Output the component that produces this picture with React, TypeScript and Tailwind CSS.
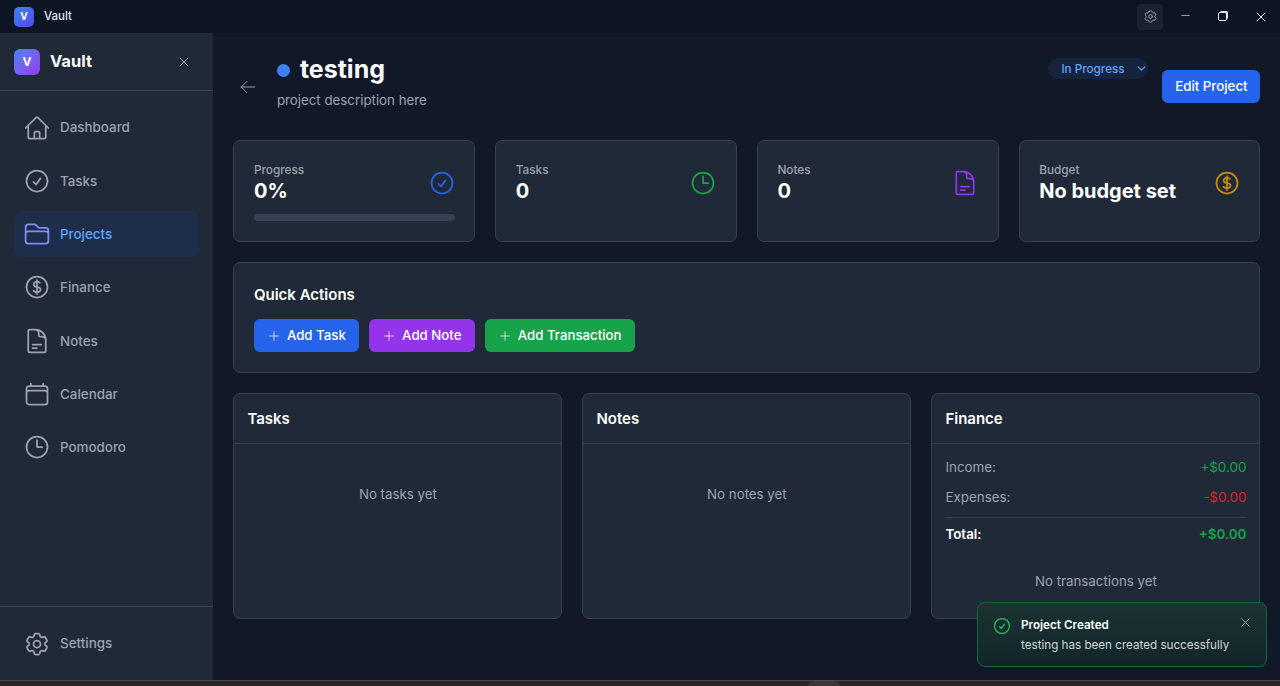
import {
  HiOutlineArrowLeft,
  HiOutlineCalendar,
  HiOutlineCheckCircle,
  HiOutlineChevronDown,
  HiOutlineClock,
  HiOutlineCog6Tooth,
  HiOutlineCurrencyDollar,
  HiOutlineDocumentText,
  HiOutlineFolder,
  HiOutlineHome,
  HiOutlineMinus,
  HiOutlinePlus,
  HiOutlineXMark,
} from "react-icons/hi2";

const navItems = [
  { label: "Dashboard", icon: HiOutlineHome },
  { label: "Tasks", icon: HiOutlineCheckCircle },
  { label: "Projects", icon: HiOutlineFolder, active: true },
  { label: "Finance", icon: HiOutlineCurrencyDollar },
  { label: "Notes", icon: HiOutlineDocumentText },
  { label: "Calendar", icon: HiOutlineCalendar },
  { label: "Pomodoro", icon: HiOutlineClock },
];

const stats = [
  { label: "Tasks", value: "0", icon: HiOutlineClock, color: "text-[#16a34a]" },
  { label: "Notes", value: "0", icon: HiOutlineDocumentText, color: "text-[#9333ea]" },
  { label: "Budget", value: "No budget set", icon: HiOutlineCurrencyDollar, color: "text-[#ca8a04]" },
];

const actions = [
  { label: "Add Task", color: "bg-[#2563eb]" },
  { label: "Add Note", color: "bg-[#9333ea]" },
  { label: "Add Transaction", color: "bg-[#16a34a]" },
];

function TitleBar() {
  return (
    <div className="flex h-[33px] shrink-0 items-center bg-[#0d1424] pl-[14px]">
      <div className="flex h-5 w-5 items-center justify-center rounded-[5px] bg-gradient-to-br from-[#3b82f6] to-[#4f46e5] text-[10px] font-bold text-white">
        V
      </div>
      <span className="ml-[10px] text-[11.5px] font-medium text-[#e5e7eb]">Vault</span>
      <div className="ml-auto flex items-center">
        <div className="flex h-[26px] w-[26px] items-center justify-center rounded bg-[#1a2130] text-[#9ca3af]">
          <HiOutlineCog6Tooth size={15} />
        </div>
        <div className="mb-[2px] ml-[14px] flex w-[16px] justify-center text-[#d1d5db]">
          <HiOutlineMinus size={13} strokeWidth={1.25} />
        </div>
        <div className="relative ml-[25px] h-[9px] w-[9px] rounded-[2px] border border-[#e5e7eb] bg-[#0d1424] shadow-[1.5px_-1.5px_0_-0.5px_#e5e7eb]" />
        <div className="ml-[26px] mr-[11px] text-[#e5e7eb]">
          <HiOutlineXMark size={16} />
        </div>
      </div>
    </div>
  );
}

function Sidebar() {
  return (
    <aside className="flex w-[214px] shrink-0 flex-col border-r border-[#111827] bg-[#1f2937]">
      <div className="flex h-[58px] shrink-0 items-center border-b border-[#374151] pl-[14px] pr-[21px]">
        <div className="flex h-[26px] w-[26px] items-center justify-center rounded-md bg-gradient-to-br from-[#3b82f6] to-[#9333ea] text-xs font-bold text-white">
          V
        </div>
        <span className="ml-[10px] text-[16.5px] font-bold text-white">Vault</span>
        <HiOutlineXMark size={16} className="ml-auto text-[#9ca3af]" />
      </div>
      <nav className="flex flex-1 flex-col gap-[7.33px] px-[14px] pt-[13.5px]">
        {navItems.map((item) => (
          <div
            key={item.label}
            className={`flex h-[46px] items-center gap-[9.5px] rounded-lg pl-[8.5px] text-[13.4px] font-medium ${
              item.active ? "bg-[#1e2d4a] text-[#60a5fa]" : "text-[#9ca3af]"
            }`}
          >
            <item.icon size={28} className={item.active ? "text-[#818cf8]" : ""} />
            {item.label}
          </div>
        ))}
      </nav>
      <div className="flex h-[74px] shrink-0 items-center gap-[9.5px] border-t border-[#374151] pl-[22.5px] text-[13.4px] font-medium text-[#9ca3af]">
        <HiOutlineCog6Tooth size={28} />
        Settings
      </div>
    </aside>
  );
}

function Panel({ title, children }: { title: string; children: React.ReactNode }) {
  return (
    <div className="h-[226px] rounded-[7px] border border-[#343f4f] bg-[#1f2937]">
      <div className="flex h-[50px] items-center border-b border-[#343f4f] px-[13px] pt-[2px] text-[15px] font-semibold text-white">
        {title}
      </div>
      {children}
    </div>
  );
}

function Row({ label, value, color }: { label: string; value: string; color: string }) {
  return (
    <div className="flex h-5 items-center justify-between text-[13.4px]">
      <span className="text-[#9ca3af]">{label}</span>
      <span className={color}>{value}</span>
    </div>
  );
}

export default function App() {
  return (
    <div className="relative flex h-[686px] w-[1280px] flex-col overflow-hidden bg-[#111827] [font-family:Inter,sans-serif]">
      <TitleBar />
      <div className="flex min-h-0 flex-1">
        <Sidebar />
        <main className="min-w-0 flex-1 pl-[19.4px] pr-[19.6px]">
          {/* Header */}
          <div className="flex h-[107px]">
            <div className="w-[43.5px] pl-[6px] pt-[45px] text-[#9ca3af]">
              <HiOutlineArrowLeft size={18} strokeWidth={1.25} />
            </div>
            <div className="pt-[17px]">
              <div className="flex h-[40px] items-center gap-[10px]">
                <span className="h-[13px] w-[13px] rounded-full bg-[#3b82f6]" />
                <h1 className="text-[25px] font-bold text-white">testing</h1>
              </div>
              <p className="mt-[1px] text-[13.3px] text-[#9ca3af]">project description here</p>
            </div>
            <div className="ml-auto flex items-start">
              <div className="mt-[25px] flex h-[21px] w-[100px] items-center rounded-full bg-[#16233f] pl-[13px] text-[11.7px] font-medium text-[#60a5fa]">
                <span className="translate-y-[1px]">In Progress</span>
                <HiOutlineChevronDown size={11} strokeWidth={2.5} className="ml-[11px]" />
              </div>
              <button className="ml-[14px] mt-[37px] h-[33px] w-[98px] rounded-md bg-[#2563eb] pt-px text-[13.3px] font-medium text-white">
                Edit Project
              </button>
            </div>
          </div>

          {/* Stat cards */}
          <div className="grid grid-cols-4 gap-5">
            <div className="flex h-[102px] flex-col rounded-[7px] border border-[#343f4f] bg-[#1f2937] pl-[19.5px] pr-[19px] pt-[22px]">
              <div className="flex items-center justify-between">
                <div>
                  <p className="text-[11.8px] font-medium leading-[14px] text-[#9ca3af]">Progress</p>
                  <p className="text-xl font-bold leading-[28px] text-white">0%</p>
                </div>
                <HiOutlineCheckCircle size={28} className="mb-[2px] mr-[-0.5px] text-[#2563eb]" />
              </div>
              <div className="mt-[9px] h-[7px] rounded-full bg-[#374151]" />
            </div>
            {stats.map((s) => (
              <div key={s.label} className="h-[102px] rounded-[7px] border border-[#343f4f] bg-[#1f2937] pl-[19.5px] pr-[19px] pt-[22px]">
                <div className="flex items-center justify-between">
                  <div>
                    <p className="text-[11.8px] font-medium leading-[14px] text-[#9ca3af]">{s.label}</p>
                    <p className="text-xl font-bold leading-[28px] text-white">{s.value}</p>
                  </div>
                  <s.icon size={28} className={`mb-[2px] mr-[-0.5px] ${s.color}`} />
                </div>
              </div>
            ))}
          </div>

          {/* Quick actions */}
          <div className="mt-5 h-[111px] rounded-[7px] border border-[#343f4f] bg-[#1f2937] pl-[19.5px] pr-5 pt-[22px]">
            <h2 className="text-[15px] font-semibold leading-[20px] text-white">Quick Actions</h2>
            <div className="mt-[14px] flex gap-[10.25px]">
              {actions.map((a) => (
                <button
                  key={a.label}
                  className={`flex h-[33px] items-center gap-[6px] rounded-md px-[13px] text-[13.25px] font-medium text-white ${a.color}`}
                >
                  <HiOutlinePlus size={14} strokeWidth={1.25} />
                  {a.label}
                </button>
              ))}
            </div>
          </div>

          {/* Panels */}
          <div className="mt-5 grid grid-cols-3 gap-5">
            <Panel title="Tasks">
              <p className="pt-[41px] text-center text-[13.3px] text-[#9ca3af]">No tasks yet</p>
            </Panel>
            <Panel title="Notes">
              <p className="pt-[41px] text-center text-[13.3px] text-[#9ca3af]">No notes yet</p>
            </Panel>
            <Panel title="Finance">
              <div className="px-[13px] pt-[13px]">
                <div className="flex flex-col gap-[10px]">
                  <Row label="Income:" value="+$0.00" color="text-[#16a34a]" />
                  <Row label="Expenses:" value="-$0.00" color="text-[#dc2626]" />
                </div>
                <div className="mt-[10px] flex h-[34px] items-center justify-between border-t border-[#343f4f] text-[13.4px] font-semibold">
                  <span className="text-white">Total:</span>
                  <span className="text-[#16a34a]">+$0.00</span>
                </div>
                <p className="pt-[21px] text-center text-[13.3px] text-[#9ca3af]">No transactions yet</p>
              </div>
            </Panel>
          </div>
        </main>
      </div>

      {/* Window edge at the bottom of the capture */}
      <div className="relative h-[6px] shrink-0 border-t border-[#4b4b4b] bg-[#2a2725]">
        <div className="absolute left-[808px] top-0 h-[6px] w-[32px] rounded-t-md bg-[#3a3735]" />
      </div>

      {/* Toast */}
      <div className="absolute left-[977px] top-[602px] flex h-[65px] w-[290px] rounded-lg border border-[#166534] bg-gradient-to-b from-[#1b3331] to-[#12262a] pl-[14px] pt-[12px]">
        <HiOutlineCheckCircle size={20} className="mt-px text-[#22c55e]" />
        <div className="ml-[9px]">
          <p className="text-[11.7px] font-semibold leading-[20px] text-white">Project Created</p>
          <p className="text-[11.65px] leading-[20px] text-[#d1d5db]">testing has been created successfully</p>
        </div>
        <HiOutlineXMark size={15} className="absolute right-[13px] top-[12px] text-[#9ca3af]" />
      </div>
    </div>
  );
}
